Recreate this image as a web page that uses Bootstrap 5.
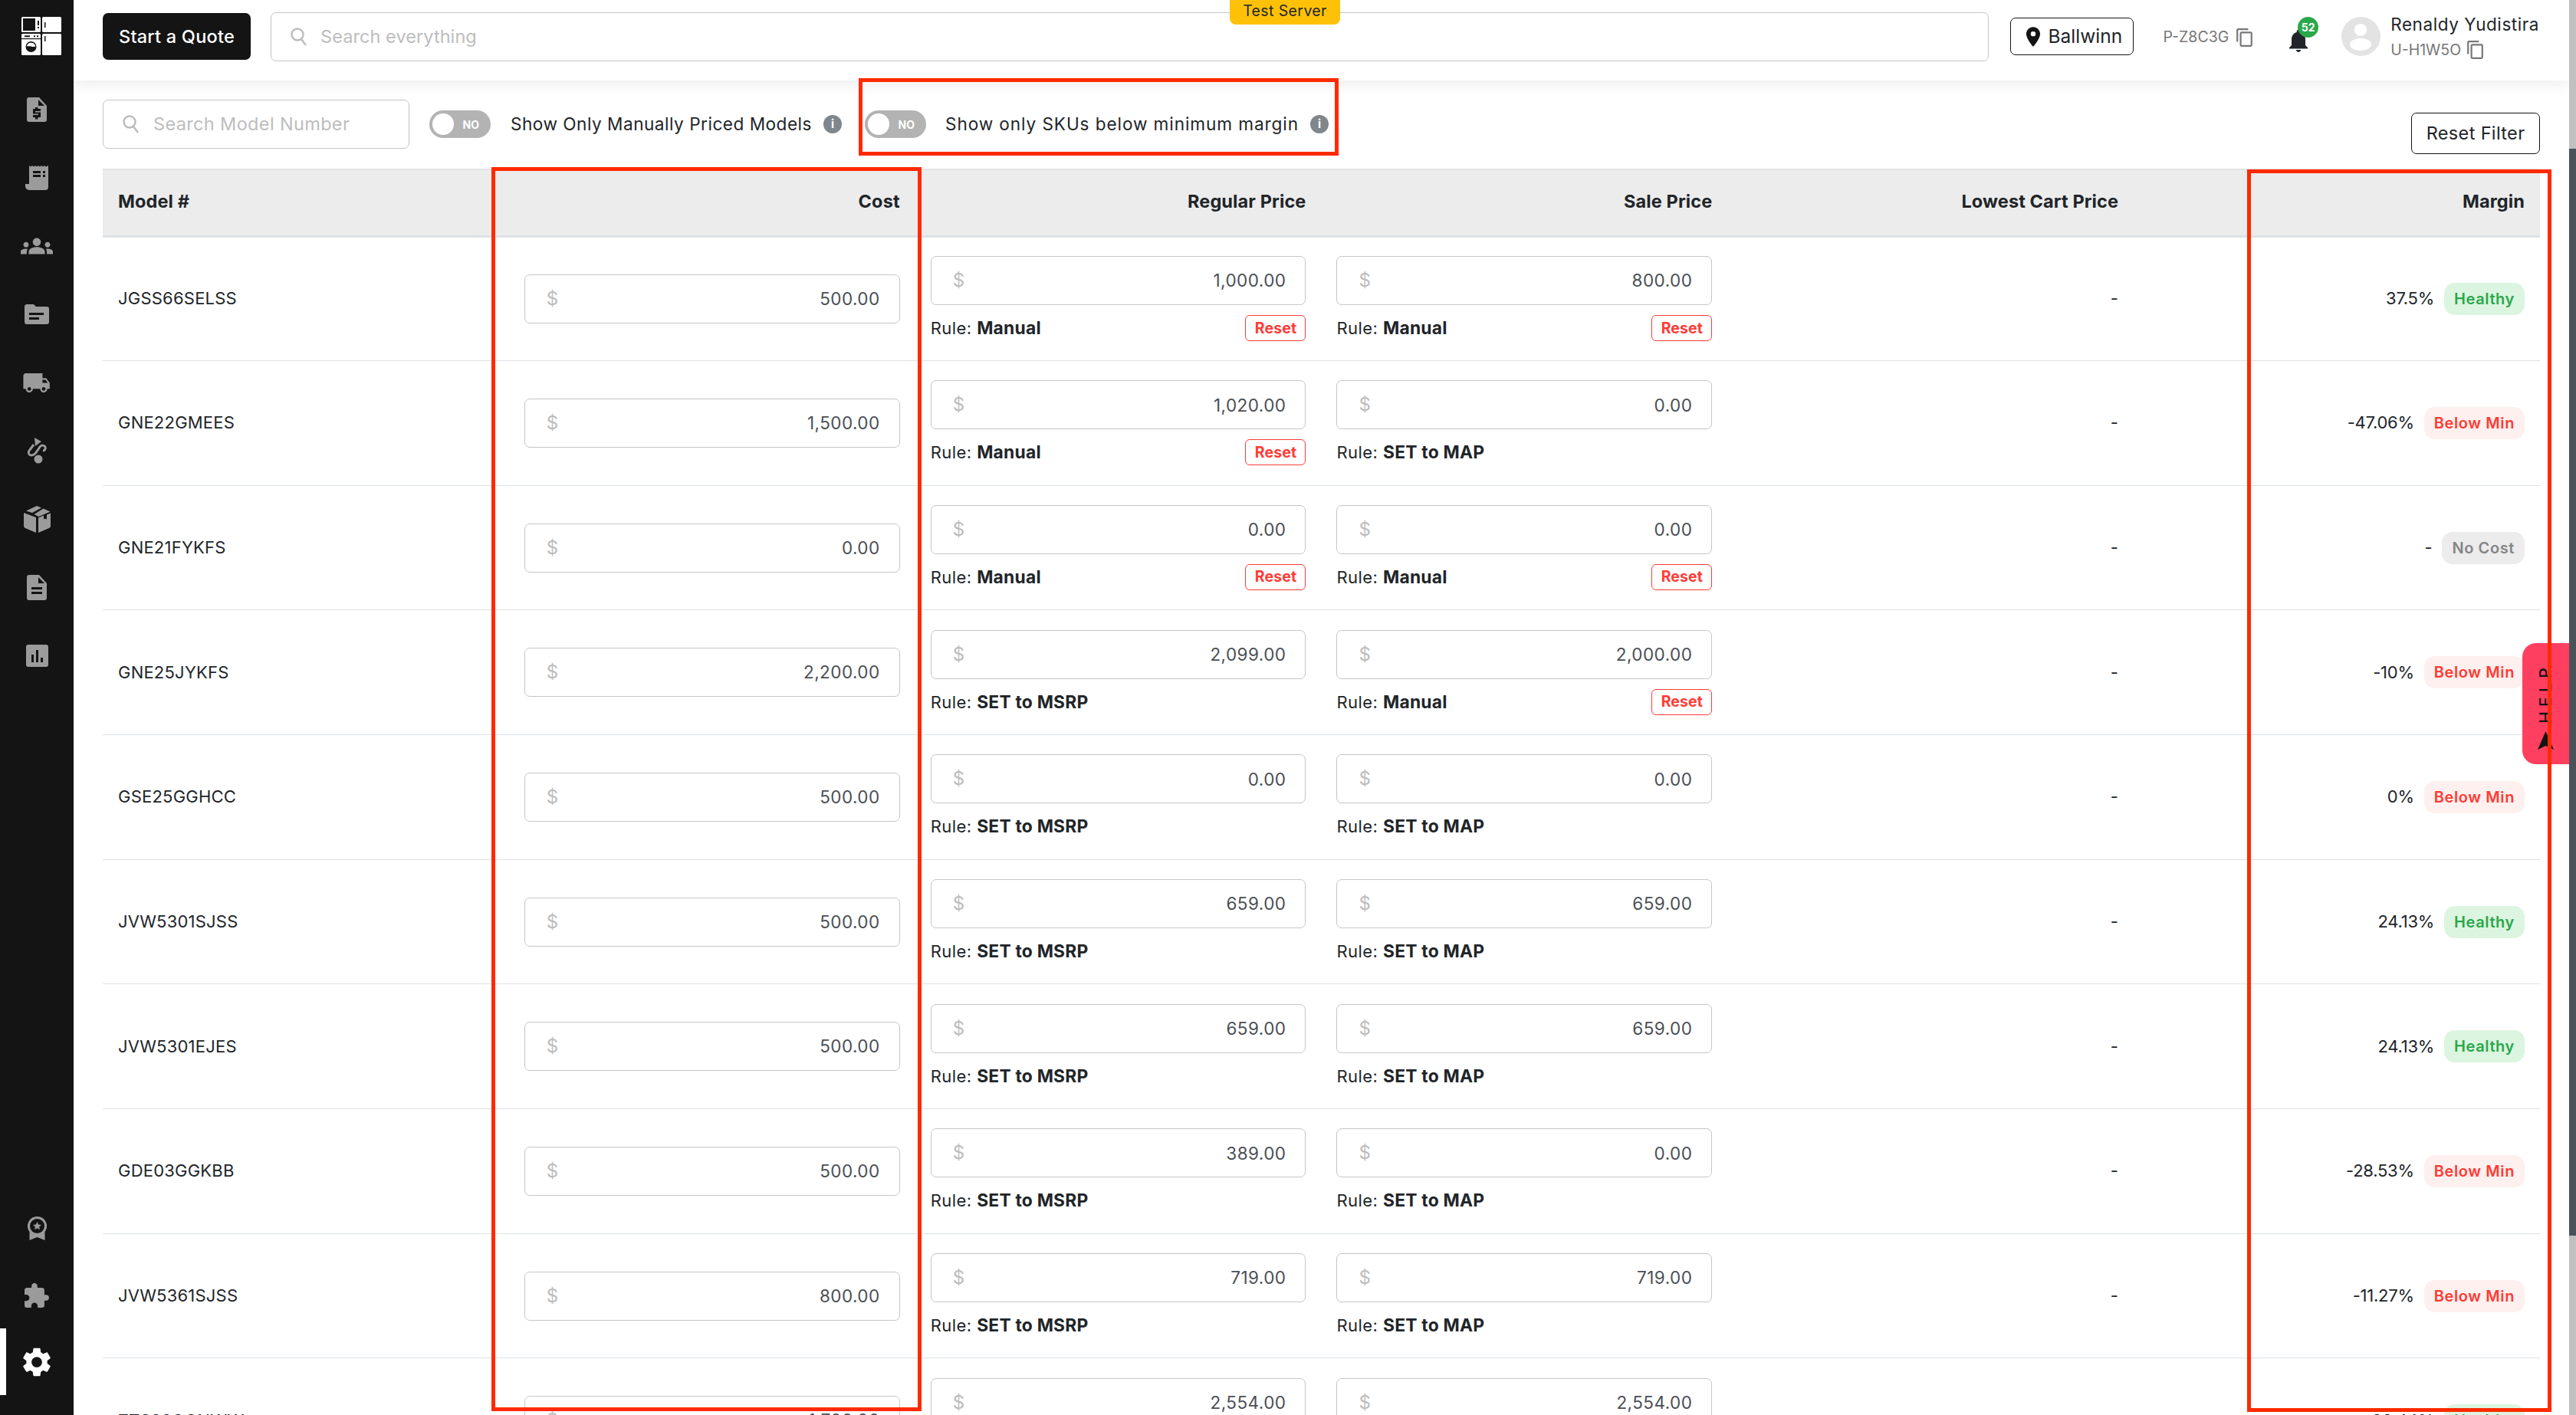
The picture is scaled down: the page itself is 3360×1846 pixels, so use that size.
<!DOCTYPE html>
<html lang="en">
<head>
<meta charset="utf-8">
<title>Pricing</title>
<link href="https://cdn.jsdelivr.net/npm/bootstrap@5.3.0/dist/css/bootstrap.min.css" rel="stylesheet">
<style>
html,body{height:100%;overflow:hidden}
body{font-family:Inter,"Liberation Sans",sans-serif;font-size:22px;color:#212529;letter-spacing:.02em;background:#fff}
.shell{height:100vh;position:relative}
.side-rail{width:96px;background:#141414;flex:none}
.logo-box{height:98.5px;padding:22px 0 0 28px}
.rail-item{height:89px;position:relative}
.rail-item svg{fill:#9b9b9b;display:block}
.rail-item.is-on svg{fill:#fff}
.rail-item.is-on::before{content:"";position:absolute;left:0;top:0;bottom:0;width:8px;background:#fff}
.rail-foot{margin-top:auto;padding-bottom:26px}
.rail-foot .rail-item{height:87px}
.work{min-width:0;overflow:hidden}
.top-strip{flex:none;height:105px;padding:16px 39px 0 38px;box-shadow:0 6px 18px rgba(0,0,0,.07);position:relative;z-index:2;background:#fff;align-items:flex-start}
.quote-btn{width:193px;height:61px;margin-top:1px;background:#141414;color:#fff;border:0;border-radius:7px;font-size:23.5px;font-weight:500;padding:0;letter-spacing:.01em}
.quote-btn:hover{background:#141414;color:#fff}
.field-box{height:64px;border:1.5px solid #c6c6c6;border-radius:7px;padding:0 24px;font-size:23.5px;color:#bdbdbd;gap:17px;letter-spacing:.015em}
.global-find{margin-left:26px;flex:1 1 auto;width:auto;gap:16px;letter-spacing:.003em}
.store-btn{margin:7px 0 0 28px;width:161px;height:49px;padding:0 0 0 20px;border:1.5px solid #141414;border-radius:7px;font-size:24.5px;color:#212529;gap:11px;background:#fff}
.code-txt{font-size:19.5px;color:#777;letter-spacing:0}
.code-item{margin:18px 0 0 39px;gap:10px}
.bell-wrap{position:relative;margin:19px 0 0 46px;width:28px;height:30px}
.count-pill{position:absolute;left:13px;top:-13px;width:27px;height:27px;border-radius:50%;background:#2aa84a;color:#fff;font-size:14px;font-weight:700;letter-spacing:0;z-index:1}
.face{width:51px;height:51px;margin:6px 13px 0 42px;flex:none}
.who-name{font-size:22.5px;line-height:26px;color:#212529;white-space:nowrap;letter-spacing:.025em;margin-top:3px}
.who-code{gap:8px;margin-top:8px;line-height:22px}
.staging-tab{position:absolute;left:1604px;top:0;width:144px;height:32px;background:#ffc107;border-radius:0 0 8px 8px;font-size:19.5px;color:#212529;z-index:3;line-height:28px;letter-spacing:.02em}
.filter-strip{height:115px;padding:25px 0 0;align-items:flex-start}
.model-find{width:400px;margin:0}
.switch-mock{width:80px;height:36px;border-radius:18px;background:#b3b3b3;margin:0 26px;color:#fff;font-size:14px;font-weight:700;letter-spacing:0;padding:0 15px 0 4px;flex:none;justify-content:space-between}
.switch-mock i{display:block;width:28px;height:28px;border-radius:50%;background:#fff}
.filter-item{height:64px}
.info-dot{width:24px;height:24px;border-radius:50%;background:#7f868c;color:#fff;font-size:15px;font-weight:700;margin-left:15px;font-style:normal;letter-spacing:0;flex:none}
.filter-label{font-size:22.6px;color:#212529;white-space:nowrap;letter-spacing:.022em}
.second-toggle .filter-label{letter-spacing:.04em}
.second-toggle .switch-mock{margin-left:30px;margin-right:25px}
.clear-btn{margin:17px 0 0 auto;width:168px;height:54px;padding:0;border:1.5px solid #141414;border-radius:7px;font-size:23.5px;color:#212529;background:#fff;letter-spacing:.015em}
.work-body{padding:0 38px}
.sheet{table-layout:fixed;width:3179px;margin:0;--bs-table-bg:transparent}
.sheet thead th{height:87px;background:#ececec;border-top:2px solid #e3e3e5;border-bottom:3px solid #dee2e6;padding:0 20px 3px;font-size:23.5px;font-weight:700;vertical-align:middle;letter-spacing:.005em}
.sheet tbody td{height:162.67px;padding:0 20px;vertical-align:middle;border-bottom:1px solid #dee2e6;font-size:22px;letter-spacing:.01em}
.money{height:64px;padding:0 25px 0 28px;border:1.5px solid #c6c6c6;border-radius:7px;color:#4a4f55;font-size:22.5px;letter-spacing:.02em}
.cur{color:#bcbcbc;font-size:24px}
.rule-line{height:34px;margin-top:13px;font-size:22px;letter-spacing:.02em}
.rule-line b{font-weight:700;font-size:22.8px;letter-spacing:.01em}
.pct-val{letter-spacing:-.012em}
.undo-btn{width:79px;height:34px;padding:0;border:1.5px solid #ff3b36;border-radius:6px;color:#ff3b36;background:#fff;font-size:19.5px;font-weight:700;line-height:1;letter-spacing:.005em}
.state-tag{height:42px;border-radius:14px;padding:0 13px;font-size:20px;font-weight:600;margin-left:13px;flex:none;letter-spacing:.03em;white-space:nowrap}
.state-ok{background:#dcf5e0;color:#2aa84a}
.state-low{background:#fdf0ee;color:#ff3b36}
.state-none{background:#ececec;color:#858585}
.help-tab{position:absolute;left:3290px;top:839px;width:61px;height:158px;background:#ff3f60;border-radius:18px 0 0 18px;z-index:4;padding-top:26px;gap:10px}
.help-word{writing-mode:vertical-rl;transform:rotate(180deg);font-size:21px;letter-spacing:.3em;color:#141414;line-height:1;font-weight:500}
.mark-box{position:absolute;border:5px solid #ff2a00;z-index:5;pointer-events:none}
.rail-track{width:9px;flex:none;background:#c0c0c0;padding-top:194px;z-index:6}
.rail-thumb{height:1418px;background:#4a5259}
</style>
</head>
<body>
<div class="shell d-flex">
  <nav class="side-rail d-flex flex-column">
    <div class="logo-box">
      <svg width="52" height="50" viewBox="0 0 52 50"><g fill="#fff"><rect width="25" height="20" rx="1.5"/><rect x="27" width="25" height="20" rx="1.5"/><rect y="22" width="25" height="28" rx="1.5"/><rect x="27" y="22" width="25" height="28" rx="1.5"/></g><g fill="#141414"><rect x="2" y="2" width="16" height="16"/><rect x="21" y="5" width="2" height="6"/><rect x="21" y="13" width="2" height="2"/><rect x="30" y="7" width="1.5" height="7"/><rect x="30" y="25" width="1.5" height="7"/><rect y="28" width="25" height="1.2"/><rect x="4" y="24.3" width="7" height="2"/><rect x="16" y="24.3" width="2" height="2"/><rect x="20" y="24.3" width="2" height="2"/><circle cx="12.5" cy="39" r="7"/></g><path d="M6.8 38.5a5.8 5.8 0 0 1 11.4 0c-3 1.600-5-1-11.400 0z" fill="#fff"/></svg>
    </div>
    <a class="rail-item d-flex align-items-center justify-content-center"><svg width="26" height="32" viewBox="0 0 26 32"><path fill-rule="evenodd" d="M3 0h13l10 11v18a3 3 0 0 1-3 3H3a3 3 0 0 1-3-3V3a3 3 0 0 1 3-3zM15 3v8h8zM11 13h3.500v2H18v3h-7v1.500h7V26h-3.500v2.500H11V26H8v-3h7v-1.500H8V15h3z"/></svg></a>
    <a class="rail-item d-flex align-items-center justify-content-center"><svg width="30" height="32" viewBox="0 0 30 32"><path fill-rule="evenodd" d="M5 0l2 1.500L9 0l2 1.500L13 0l2 1.500L17 0l2 1.500L21 0l2 1.500L25 0l2 1.500L30 0v28a4 4 0 0 1-4 4H5a5 5 0 0 1-5-5v-3h5zM10 7v3h10V7zM23 7v3h3V7zM10 12v3h10v-3zM23 12v3h3v-3z"/></svg></a>
    <a class="rail-item d-flex align-items-center justify-content-center"><svg width="42" height="24" viewBox="0 5.500 24 13"><path d="M12 12.750c1.630 0 3.070.39 4.240.9 1.080.48 1.760 1.560 1.760 2.730V18H6v-1.610c0-1.180.68-2.260 1.760-2.730 1.170-.52 2.610-.91 4.240-.91zM4 13c1.100 0 2-.9 2-2s-.9-2-2-2-2 .9-2 2 .9 2 2 2zm1.130 1.100c-.37-.06-.74-.1-1.130-.1-.99 0-1.930.21-2.780.58C.48 14.900 0 15.620 0 16.430V18h4.500v-1.610c0-.83.23-1.610.63-2.290zM20 13c1.100 0 2-.9 2-2s-.9-2-2-2-2 .9-2 2 .9 2 2 2zm4 3.430c0-.81-.48-1.530-1.220-1.850-.85-.37-1.790-.58-2.780-.58-.39 0-.76.04-1.130.1.4.68.63 1.460.63 2.290V18H24v-1.570zM12 6c1.660 0 3 1.340 3 3s-1.340 3-3 3-3-1.340-3-3 1.340-3 3-3z"/></svg></a>
    <a class="rail-item d-flex align-items-center justify-content-center"><svg width="32" height="26" viewBox="0 0 32 26"><path fill-rule="evenodd" d="M3 0h9l3 3h14a3 3 0 0 1 3 3v17a3 3 0 0 1-3 3H3a3 3 0 0 1-3-3V3a3 3 0 0 1 3-3zM6 11v3h19v-3zM6 17v3h13v-3z"/></svg></a>
    <a class="rail-item d-flex align-items-center justify-content-center"><svg width="36" height="25" viewBox="1 4 22.500 16"><path d="M20 8h-3V4H3c-1.100 0-2 .9-2 2v11h2c0 1.660 1.340 3 3 3s3-1.340 3-3h6c0 1.660 1.340 3 3 3s3-1.340 3-3h2v-5l-3-4zM6 18.500c-.83 0-1.500-.67-1.500-1.500s.67-1.500 1.500-1.500 1.500.67 1.500 1.500-.67 1.500-1.500 1.500zm13.500-9l1.960 2.500H17V9.500h2.500zm-1.500 9c-.83 0-1.500-.67-1.500-1.500s.67-1.500 1.500-1.500 1.500.67 1.500 1.500-.67 1.500-1.500 1.500z"/></svg></a>
    <a class="rail-item d-flex align-items-center justify-content-center"><svg width="30" height="34" viewBox="0 0 30 34"><path d="M12 0l9 5-8 6z"/><path d="M9 9L3 17c-2 3 0 6 3 6s5-2 7-5l4-6c2-3 6-2 7 0 1 3-1 5-3 5" fill="none" stroke="#9b9b9b" stroke-width="3" transform="translate(2 0)"/><circle cx="17" cy="28" r="5.500"/></svg></a>
    <a class="rail-item d-flex align-items-center justify-content-center"><svg width="35" height="35" viewBox="0 0 35 35"><path d="M17 0l6 2.500-12 6.500-8-2.500zM25.500 3.500l9 4-15 6.500-6-3zM0 9l16 6v20L2 29a3 3 0 0 1-2-2.500zM35 9.500v17a3 3 0 0 1-2 2.500l-14 6V15.500l7-3v5l2-1 2 1v-6z"/></svg></a>
    <a class="rail-item d-flex align-items-center justify-content-center"><svg width="26" height="33" viewBox="0 0 26 33"><path fill-rule="evenodd" d="M3 0h13l10 11v19a3 3 0 0 1-3 3H3a3 3 0 0 1-3-3V3a3 3 0 0 1 3-3zM15 3v8h8zM6 16v3h14v-3zM6 22v3h14v-3z"/></svg></a>
    <a class="rail-item d-flex align-items-center justify-content-center"><svg width="29" height="29" viewBox="0 0 29 29"><path fill-rule="evenodd" d="M3 0h23a3 3 0 0 1 3 3v23a3 3 0 0 1-3 3H3a3 3 0 0 1-3-3V3a3 3 0 0 1 3-3zM7 13v10h3V13zM13 7v16h3V7zM19 17v6h3v-6z"/></svg></a>
    <div class="rail-foot">
      <a class="rail-item d-flex align-items-center justify-content-center"><svg width="25" height="31" viewBox="0 0 25 31"><path fill-rule="evenodd" d="M12.500 0a12.500 12.500 0 0 1 10 20v11l-10-4-10 4V20a12.500 12.500 0 0 1 10-20zM12.500 3a9.500 9.500 0 1 0 0 19 9.500 9.500 0 0 0 0-19z"/><path d="M12.500 7l1.600 3.500 3.900.4-2.900 2.600.8 3.800-3.400-2-3.400 2 .8-3.800L7 10.900l3.900-.4z"/></svg></a>
      <a class="rail-item d-flex align-items-center justify-content-center"><svg width="32" height="32" viewBox="2 1 21 21"><path d="M20.500 11H19V7c0-1.100-.9-2-2-2h-4V3.500C13 2.120 11.880 1 10.500 1S8 2.120 8 3.500V5H4c-1.100 0-1.990.9-1.990 2v3.800H3.500c1.490 0 2.700 1.210 2.700 2.700s-1.210 2.700-2.700 2.700H2V20c0 1.100.9 2 2 2h3.800v-1.500c0-1.490 1.210-2.700 2.700-2.700 1.490 0 2.700 1.210 2.700 2.700V22H17c1.100 0 2-.9 2-2v-4h1.500c1.380 0 2.500-1.120 2.500-2.500S21.880 11 20.500 11z"/></svg></a>
      <a class="rail-item is-on d-flex align-items-center justify-content-center"><svg width="38" height="38" viewBox="2 2 20 20"><path fill-rule="evenodd" d="M19.140 12.940c.04-.3.06-.61.06-.94 0-.32-.02-.64-.07-.94l2.030-1.580c.18-.14.23-.41.12-.61l-1.920-3.320c-.12-.22-.37-.29-.59-.22l-2.390.96c-.5-.38-1.030-.7-1.620-.94l-.36-2.540c-.04-.24-.24-.41-.48-.41h-3.840c-.24 0-.43.17-.47.41l-.36 2.540c-.59.24-1.130.57-1.620.94l-2.390-.96c-.22-.08-.47 0-.59.22L2.740 8.870c-.12.21-.08.47.12.61l2.030 1.580c-.05.3-.09.63-.09.94s.02.64.07.94l-2.030 1.580c-.18.14-.23.41-.12.61l1.920 3.320c.12.22.37.29.59.22l2.390-.96c.5.38 1.030.7 1.620.94l.36 2.540c.05.24.24.41.48.41h3.840c.24 0 .44-.17.47-.41l.36-2.540c.59-.24 1.130-.56 1.620-.94l2.390.96c.22.08.47 0 .59-.22l1.920-3.320c.12-.22.07-.47-.12-.61l-2.010-1.580zM12 15.600c-1.980 0-3.600-1.620-3.600-3.600s1.620-3.600 3.600-3.600 3.600 1.620 3.600 3.600-1.620 3.600-3.600 3.600z"/></svg></a>
    </div>
  </nav>
  <main class="work flex-grow-1 d-flex flex-column">
    <header class="top-strip d-flex">
      <button class="btn quote-btn" type="button">Start a Quote</button>
      <div class="field-box global-find d-flex align-items-center">
        <svg width="24" height="26" viewBox="0 0 24 26" fill="none" stroke="#bdbdbd" stroke-width="2.500"><circle cx="10" cy="10" r="7.500"/><path d="M15 16l6 8"/></svg>
        <span>Search everything</span>
      </div>
      <button class="btn store-btn d-flex align-items-center" type="button">
        <svg width="18" height="26" viewBox="5 2 14 20" fill="#141414"><path d="M12 2C8.130 2 5 5.130 5 9c0 5.250 7 13 7 13s7-7.750 7-13c0-3.870-3.130-7-7-7zm0 9.500a2.500 2.500 0 0 1 0-5 2.500 2.500 0 0 1 0 5z"/></svg>
        <span>Ballwinn</span>
      </button>
      <div class="code-item d-flex align-items-center">
        <span class="code-txt">P-Z8C3G</span>
        <svg width="21" height="24" viewBox="2 1 19 22" fill="#777"><path d="M16 1H4c-1.100 0-2 .9-2 2v14h2V3h12V1zm3 4H8c-1.100 0-2 .9-2 2v14c0 1.100.9 2 2 2h11c1.100 0 2-.9 2-2V7c0-1.100-.9-2-2-2zm0 16H8V7h11v14z"/></svg>
      </div>
      <div class="bell-wrap">
        <svg width="28" height="30" viewBox="4 2 16 20" fill="#212529"><path d="M12 22c1.100 0 2-.9 2-2h-4c0 1.100.9 2 2 2zm6-6v-5c0-3.070-1.630-5.640-4.500-6.320V4c0-.83-.67-1.500-1.500-1.500s-1.500.67-1.500 1.500v.68C7.640 5.360 6 7.920 6 11v5l-2 2v1h16v-1l-2-2z"/></svg>
        <span class="count-pill d-flex align-items-center justify-content-center">52</span>
      </div>
      <svg class="face" viewBox="0 0 51 51"><circle cx="25.500" cy="25.500" r="25.500" fill="#e3e3e3"/><circle cx="25" cy="17" r="8" fill="#fff"/><ellipse cx="25" cy="36" rx="14" ry="8" fill="#fff"/></svg>
      <div class="flex-shrink-0">
        <div class="who-name">Renaldy Yudistira</div>
        <div class="who-code d-flex align-items-center">
          <span class="code-txt">U-H1W5O</span>
          <svg width="21" height="24" viewBox="2 1 19 22" fill="#777"><path d="M16 1H4c-1.100 0-2 .9-2 2v14h2V3h12V1zm3 4H8c-1.100 0-2 .9-2 2v14c0 1.100.9 2 2 2h11c1.100 0 2-.9 2-2V7c0-1.100-.9-2-2-2zm0 16H8V7h11v14z"/></svg>
        </div>
      </div>
    </header>
    <div class="work-body flex-grow-1 overflow-hidden">
      <div class="filter-strip d-flex">
        <div class="field-box model-find d-flex align-items-center">
          <svg width="24" height="26" viewBox="0 0 24 26" fill="none" stroke="#bdbdbd" stroke-width="2.500"><circle cx="10" cy="10" r="7.500"/><path d="M15 16l6 8"/></svg>
          <span>Search Model Number</span>
        </div>
        <div class="filter-item d-flex align-items-center">
          <div class="switch-mock d-flex align-items-center"><i></i><span>NO</span></div>
          <span class="filter-label">Show Only Manually Priced Models</span>
          <em class="info-dot d-flex align-items-center justify-content-center">i</em>
        </div>
        <div class="filter-item second-toggle d-flex align-items-center">
          <div class="switch-mock d-flex align-items-center"><i></i><span>NO</span></div>
          <span class="filter-label">Show only SKUs below minimum margin</span>
          <em class="info-dot d-flex align-items-center justify-content-center">i</em>
        </div>
        <button class="btn clear-btn" type="button">Reset Filter</button>
      </div>
      <table class="table sheet">
        <thead><tr><th>Model #</th><th class="text-end">Cost</th><th class="text-end">Regular Price</th><th class="text-end">Sale Price</th><th class="text-end">Lowest Cart Price</th><th class="text-end">Margin</th></tr></thead>
        <tbody>
          <tr><td>JGSS66SELSS</td>
            <td><div class="money d-flex align-items-center justify-content-between"><span class="cur">$</span><span>500.00</span></div></td>
            <td><div class="money d-flex align-items-center justify-content-between"><span class="cur">$</span><span>1,000.00</span></div><div class="rule-line d-flex align-items-center justify-content-between"><span>Rule: <b>Manual</b></span><button class="btn undo-btn" type="button">Reset</button></div></td>
            <td><div class="money d-flex align-items-center justify-content-between"><span class="cur">$</span><span>800.00</span></div><div class="rule-line d-flex align-items-center justify-content-between"><span>Rule: <b>Manual</b></span><button class="btn undo-btn" type="button">Reset</button></div></td>
            <td class="text-end">-</td>
            <td><div class="d-flex align-items-center justify-content-end"><span class="pct-val">37.5%</span><span class="state-tag state-ok d-flex align-items-center">Healthy</span></div></td></tr>
          <tr><td>GNE22GMEES</td>
            <td><div class="money d-flex align-items-center justify-content-between"><span class="cur">$</span><span>1,500.00</span></div></td>
            <td><div class="money d-flex align-items-center justify-content-between"><span class="cur">$</span><span>1,020.00</span></div><div class="rule-line d-flex align-items-center justify-content-between"><span>Rule: <b>Manual</b></span><button class="btn undo-btn" type="button">Reset</button></div></td>
            <td><div class="money d-flex align-items-center justify-content-between"><span class="cur">$</span><span>0.00</span></div><div class="rule-line d-flex align-items-center justify-content-between"><span>Rule: <b>SET to MAP</b></span></div></td>
            <td class="text-end">-</td>
            <td><div class="d-flex align-items-center justify-content-end"><span class="pct-val">-47.06%</span><span class="state-tag state-low d-flex align-items-center">Below Min</span></div></td></tr>
          <tr><td>GNE21FYKFS</td>
            <td><div class="money d-flex align-items-center justify-content-between"><span class="cur">$</span><span>0.00</span></div></td>
            <td><div class="money d-flex align-items-center justify-content-between"><span class="cur">$</span><span>0.00</span></div><div class="rule-line d-flex align-items-center justify-content-between"><span>Rule: <b>Manual</b></span><button class="btn undo-btn" type="button">Reset</button></div></td>
            <td><div class="money d-flex align-items-center justify-content-between"><span class="cur">$</span><span>0.00</span></div><div class="rule-line d-flex align-items-center justify-content-between"><span>Rule: <b>Manual</b></span><button class="btn undo-btn" type="button">Reset</button></div></td>
            <td class="text-end">-</td>
            <td><div class="d-flex align-items-center justify-content-end"><span class="pct-val">-</span><span class="state-tag state-none d-flex align-items-center">No Cost</span></div></td></tr>
          <tr><td>GNE25JYKFS</td>
            <td><div class="money d-flex align-items-center justify-content-between"><span class="cur">$</span><span>2,200.00</span></div></td>
            <td><div class="money d-flex align-items-center justify-content-between"><span class="cur">$</span><span>2,099.00</span></div><div class="rule-line d-flex align-items-center justify-content-between"><span>Rule: <b>SET to MSRP</b></span></div></td>
            <td><div class="money d-flex align-items-center justify-content-between"><span class="cur">$</span><span>2,000.00</span></div><div class="rule-line d-flex align-items-center justify-content-between"><span>Rule: <b>Manual</b></span><button class="btn undo-btn" type="button">Reset</button></div></td>
            <td class="text-end">-</td>
            <td><div class="d-flex align-items-center justify-content-end"><span class="pct-val">-10%</span><span class="state-tag state-low d-flex align-items-center">Below Min</span></div></td></tr>
          <tr><td>GSE25GGHCC</td>
            <td><div class="money d-flex align-items-center justify-content-between"><span class="cur">$</span><span>500.00</span></div></td>
            <td><div class="money d-flex align-items-center justify-content-between"><span class="cur">$</span><span>0.00</span></div><div class="rule-line d-flex align-items-center justify-content-between"><span>Rule: <b>SET to MSRP</b></span></div></td>
            <td><div class="money d-flex align-items-center justify-content-between"><span class="cur">$</span><span>0.00</span></div><div class="rule-line d-flex align-items-center justify-content-between"><span>Rule: <b>SET to MAP</b></span></div></td>
            <td class="text-end">-</td>
            <td><div class="d-flex align-items-center justify-content-end"><span class="pct-val">0%</span><span class="state-tag state-low d-flex align-items-center">Below Min</span></div></td></tr>
          <tr><td>JVW5301SJSS</td>
            <td><div class="money d-flex align-items-center justify-content-between"><span class="cur">$</span><span>500.00</span></div></td>
            <td><div class="money d-flex align-items-center justify-content-between"><span class="cur">$</span><span>659.00</span></div><div class="rule-line d-flex align-items-center justify-content-between"><span>Rule: <b>SET to MSRP</b></span></div></td>
            <td><div class="money d-flex align-items-center justify-content-between"><span class="cur">$</span><span>659.00</span></div><div class="rule-line d-flex align-items-center justify-content-between"><span>Rule: <b>SET to MAP</b></span></div></td>
            <td class="text-end">-</td>
            <td><div class="d-flex align-items-center justify-content-end"><span class="pct-val">24.13%</span><span class="state-tag state-ok d-flex align-items-center">Healthy</span></div></td></tr>
          <tr><td>JVW5301EJES</td>
            <td><div class="money d-flex align-items-center justify-content-between"><span class="cur">$</span><span>500.00</span></div></td>
            <td><div class="money d-flex align-items-center justify-content-between"><span class="cur">$</span><span>659.00</span></div><div class="rule-line d-flex align-items-center justify-content-between"><span>Rule: <b>SET to MSRP</b></span></div></td>
            <td><div class="money d-flex align-items-center justify-content-between"><span class="cur">$</span><span>659.00</span></div><div class="rule-line d-flex align-items-center justify-content-between"><span>Rule: <b>SET to MAP</b></span></div></td>
            <td class="text-end">-</td>
            <td><div class="d-flex align-items-center justify-content-end"><span class="pct-val">24.13%</span><span class="state-tag state-ok d-flex align-items-center">Healthy</span></div></td></tr>
          <tr><td>GDE03GGKBB</td>
            <td><div class="money d-flex align-items-center justify-content-between"><span class="cur">$</span><span>500.00</span></div></td>
            <td><div class="money d-flex align-items-center justify-content-between"><span class="cur">$</span><span>389.00</span></div><div class="rule-line d-flex align-items-center justify-content-between"><span>Rule: <b>SET to MSRP</b></span></div></td>
            <td><div class="money d-flex align-items-center justify-content-between"><span class="cur">$</span><span>0.00</span></div><div class="rule-line d-flex align-items-center justify-content-between"><span>Rule: <b>SET to MAP</b></span></div></td>
            <td class="text-end">-</td>
            <td><div class="d-flex align-items-center justify-content-end"><span class="pct-val">-28.53%</span><span class="state-tag state-low d-flex align-items-center">Below Min</span></div></td></tr>
          <tr><td>JVW5361SJSS</td>
            <td><div class="money d-flex align-items-center justify-content-between"><span class="cur">$</span><span>800.00</span></div></td>
            <td><div class="money d-flex align-items-center justify-content-between"><span class="cur">$</span><span>719.00</span></div><div class="rule-line d-flex align-items-center justify-content-between"><span>Rule: <b>SET to MSRP</b></span></div></td>
            <td><div class="money d-flex align-items-center justify-content-between"><span class="cur">$</span><span>719.00</span></div><div class="rule-line d-flex align-items-center justify-content-between"><span>Rule: <b>SET to MAP</b></span></div></td>
            <td class="text-end">-</td>
            <td><div class="d-flex align-items-center justify-content-end"><span class="pct-val">-11.27%</span><span class="state-tag state-low d-flex align-items-center">Below Min</span></div></td></tr>
          <tr><td>ZTS22GGNWW</td>
            <td><div class="money d-flex align-items-center justify-content-between"><span class="cur">$</span><span>1,700.00</span></div></td>
            <td><div class="money d-flex align-items-center justify-content-between"><span class="cur">$</span><span>2,554.00</span></div><div class="rule-line d-flex align-items-center justify-content-between"><span>Rule: <b>SET to MSRP</b></span></div></td>
            <td><div class="money d-flex align-items-center justify-content-between"><span class="cur">$</span><span>2,554.00</span></div><div class="rule-line d-flex align-items-center justify-content-between"><span>Rule: <b>SET to MAP</b></span></div></td>
            <td class="text-end">-</td>
            <td><div class="d-flex align-items-center justify-content-end"><span class="pct-val">33.44%</span><span class="state-tag state-ok d-flex align-items-center">Healthy</span></div></td></tr>
        </tbody>
      </table>
    </div>
  </main>
  <div class="rail-track"><div class="rail-thumb"></div></div>

  <div class="staging-tab text-center">Test Server</div>
  <div class="help-tab d-flex flex-column align-items-center">
    <span class="help-word">HELP</span>
    <svg width="21" height="24" viewBox="0 0 21 24" fill="#141414"><path d="M10.500 0L21 24l-10.500-5L0 24z"/></svg>
  </div>
  <div class="mark-box" style="left:1120px;top:102px;width:626px;height:101px"></div>
  <div class="mark-box" style="left:641px;top:218px;width:561px;height:1623px"></div>
  <div class="mark-box" style="left:2931px;top:221px;width:397px;height:1621px"></div>
</div>
<script src="https://cdn.jsdelivr.net/npm/bootstrap@5.3.0/dist/js/bootstrap.bundle.min.js"></script>
</body>
</html>
